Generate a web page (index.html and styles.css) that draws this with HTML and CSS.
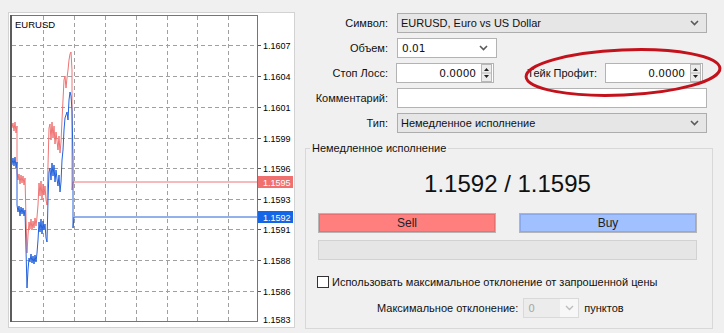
FILE: index.html
```html
<!DOCTYPE html>
<html lang="ru">
<head>
<meta charset="utf-8">
<title>Ордер</title>
<link rel="stylesheet" href="styles.css">
</head>
<body>
<div class="app">
  <div class="chart-pane">
    <svg class="chart" width="287" height="316" viewBox="8 12 287 316" xmlns="http://www.w3.org/2000/svg">
      <rect x="8" y="12" width="287" height="316" fill="#d2d2d2"/>
      <rect x="9" y="13" width="285" height="314" fill="#ffffff"/>
      <path class="grid" d="M12 45.5H257M12 76.5H257M12 107.5H257M12 138.5H257M12 168.5H257M12 199.5H257M12 229.5H257M12 260.5H257M12 291.5H257"/>
      <path class="grid" d="M43.5 16V321M74.5 16V321M105.5 16V321M136.5 16V321M167.5 16V321M197.5 16V321M228.5 16V321"/>
      <polyline fill="none" stroke="#ef7474" stroke-width="1" points="12,128 13,123 14,131 15,122 16,133 17,126 17,172 18,180 19,174 20,184 21,175 22,183 23,176 24,185 25,178 26,218 27,253 28,235 29,222 30,229 31,219 32,230 33,221 34,228 35,218 36,226 37,217 38,205 39,183 40,196 41,181 42,199 43,184 44,195 45,186 46,200 47,205 48,165 49,128 50,124 51,140 52,122 53,138 54,126 55,144 56,132 57,141 58,150 59,136 60,153 61,142 62,120 63,100 64,80 65,76 66,88 67,78 68,70 69,60 70,54 71,52 72,70 72,190 73,182 257,182"/>
      <polyline fill="none" stroke="#2462dc" stroke-width="1" points="12,165 13,158 14,166 15,157 16,168 17,162 17,205 18,212 19,206 20,216 21,207 22,214 23,208 24,216 25,210 26,250 27,288 28,270 29,258 30,262 31,254 32,263 33,256 34,264 35,255 36,262 37,253 38,240 39,222 40,232 41,219 42,234 43,221 44,230 45,224 46,238 47,242 48,200 49,172 50,168 51,180 52,163 53,176 54,165 55,182 56,170 57,179 58,186 59,175 60,192 61,182 62,160 63,150 64,130 65,118 66,115 67,112 68,120 69,100 70,92 71,96 72,110 73,160 73,228 74,217 257,217"/>
      <rect x="11.5" y="15.5" width="246" height="306" fill="none" stroke="#757575"/>
      <line x1="11" y1="15" x2="11" y2="322" stroke="#5c5c5c" stroke-width="2"/>
      <path d="M258 45.5h3M258 76.5h3M258 107.5h3M258 138.5h3M258 168.5h3M258 199.5h3M258 229.5h3M258 260.5h3M258 291.5h3" stroke="#555" stroke-width="1"/>
      <text class="sym" x="15" y="27.5">EURUSD</text>
      <g class="axis">
        <text x="263" y="49">1.1607</text>
        <text x="263" y="80">1.1604</text>
        <text x="263" y="111">1.1601</text>
        <text x="263" y="141.5">1.1599</text>
        <text x="263" y="172">1.1596</text>
        <text x="263" y="202.5">1.1593</text>
        <text x="263" y="232.5">1.1591</text>
        <text x="263" y="264">1.1588</text>
        <text x="263" y="295">1.1586</text>
        <text x="263" y="323">1.1583</text>
      </g>
      <rect x="258" y="176" width="35" height="12" fill="#f07070"/>
      <text class="axis-tag" x="263" y="185.5">1.1595</text>
      <rect x="258" y="211" width="35" height="12" fill="#1466e6"/>
      <text class="axis-tag" x="263" y="220.5">1.1592</text>
    </svg>
  </div>

  <div class="order">
    <div class="fields">
      <label class="lbl">Символ:</label>
      <div class="select">
        <span class="val">EURUSD, Euro vs US Dollar</span>
        <svg class="chev" width="9" height="6" viewBox="0 0 9 6"><path d="M1 1 L4.5 4.5 L8 1" fill="none" stroke="#5a5a5a" stroke-width="1.6"/></svg>
      </div>

      <label class="lbl">Объем:</label>
      <div class="combo">
        <span class="val num">0.01</span>
        <svg class="chev" width="9" height="6" viewBox="0 0 9 6"><path d="M1 1 L4.5 4.5 L8 1" fill="none" stroke="#5a5a5a" stroke-width="1.6"/></svg>
      </div>

      <label class="lbl">Стоп Лосс:</label>
      <div class="pair">
        <div class="spin-input">
          <span class="val num">0.0000</span>
          <span class="spinner">
            <svg width="11" height="18" viewBox="0 0 11 18"><rect x="0.5" y="0.5" width="10" height="17" fill="#ececec" stroke="#b8b8b8"/><line x1="1" y1="9" x2="10" y2="9" stroke="#b8b8b8"/><path d="M3 7 L5.5 4 L8 7 Z" fill="#222"/><path d="M3 11 L5.5 14 L8 11 Z" fill="#222"/></svg>
          </span>
        </div>
        <label class="lbl tp">Тейк Профит:</label>
        <div class="spin-input wide">
          <span class="val num">0.0000</span>
          <span class="spinner">
            <svg width="11" height="18" viewBox="0 0 11 18"><rect x="0.5" y="0.5" width="10" height="17" fill="#ececec" stroke="#b8b8b8"/><line x1="1" y1="9" x2="10" y2="9" stroke="#b8b8b8"/><path d="M3 7 L5.5 4 L8 7 Z" fill="#222"/><path d="M3 11 L5.5 14 L8 11 Z" fill="#222"/></svg>
          </span>
        </div>
      </div>

      <label class="lbl">Комментарий:</label>
      <div class="input"></div>

      <label class="lbl">Тип:</label>
      <div class="select">
        <span class="val">Немедленное исполнение</span>
        <svg class="chev" width="9" height="6" viewBox="0 0 9 6"><path d="M1 1 L4.5 4.5 L8 1" fill="none" stroke="#5a5a5a" stroke-width="1.6"/></svg>
      </div>
    </div>

    <fieldset class="exec">
      <legend>Немедленное исполнение</legend>
      <div class="quote">1.1592 / 1.1595</div>
      <div class="buttons">
        <div class="btn sell">Sell</div>
        <div class="btn buy">Buy</div>
      </div>
      <div class="progress"></div>
      <div class="check-row">
        <span class="checkbox"></span>
        <span>Использовать максимальное отклонение от запрошенной цены</span>
      </div>
      <div class="dev-row">
        <span class="dev-lbl">Максимальное отклонение:</span>
        <div class="dev-select">
          <span class="dev-val">0</span>
          <span class="dev-arrow"><svg width="9" height="6" viewBox="0 0 9 6"><path d="M1 1 L4.5 4.5 L8 1" fill="none" stroke="#bdbdbd" stroke-width="1.4"/></svg></span>
        </div>
        <span class="dev-unit">пунктов</span>
      </div>
    </fieldset>
  </div>

  <svg class="mark" width="724" height="333" viewBox="0 0 724 333" xmlns="http://www.w3.org/2000/svg">
    <ellipse cx="623" cy="72.5" rx="97" ry="22.5" transform="rotate(-2.5 623 72.5)" fill="none" stroke="#c4121c" stroke-width="3"/>
  </svg>
</div>
</body>
</html>
```

FILE: styles.css
```css
html, body {
  margin: 0;
  padding: 0;
}
body {
  width: 724px;
  height: 333px;
  overflow: hidden;
  background: #f0f0f0;
  font-family: "Liberation Sans", Arial, sans-serif;
  font-size: 11px;
  color: #111;
}
.app {
  position: relative;
  display: flex;
  align-items: flex-start;
  padding: 12px 0 0 8px;
  height: 321px;
}
.chart-pane {
  width: 287px;
  height: 316px;
  flex: none;
}
.chart {
  display: block;
}
.chart .grid {
  fill: none;
  stroke: #a0a0a0;
  stroke-width: 1;
  stroke-dasharray: 4 3;
}
.chart .sym {
  font-family: "Liberation Sans", Arial, sans-serif;
  font-size: 9.5px;
  fill: #000;
}
.chart .axis text {
  font-family: "Liberation Sans", Arial, sans-serif;
  font-size: 9px;
  fill: #000;
}
.chart .axis-tag {
  font-family: "Liberation Sans", Arial, sans-serif;
  font-size: 9px;
  fill: #ffffff;
}

.order {
  flex: 1;
  padding-left: 5px;
  padding-top: 1px;
}
.fields {
  display: grid;
  grid-template-columns: 88px 310px;
  grid-auto-rows: 20px;
  column-gap: 9px;
  row-gap: 5px;
}
.lbl {
  display: flex;
  align-items: center;
  justify-content: flex-end;
  white-space: nowrap;
  color: #111;
}
.select, .combo, .input, .spin-input {
  box-sizing: border-box;
  height: 20px;
  display: flex;
  align-items: center;
  border: 1px solid #b3b3b3;
}
.select {
  background: #e6e6e6;
  border-color: #adadad;
  padding: 0 7px 0 3px;
  justify-content: space-between;
}
.combo {
  width: 100px;
  background: #fff;
  padding: 0 8px 0 4px;
  justify-content: space-between;
}
.input {
  background: #fff;
}
.val {
  white-space: nowrap;
}
.num {
  font-family: "DejaVu Sans", Verdana, sans-serif;
  font-size: 10.5px;
  color: #111;
}
.chev {
  display: block;
}
.pair {
  display: flex;
  align-items: center;
}
.spin-input {
  width: 98px;
  margin-left: -1px;
  background: #fff;
  justify-content: flex-end;
  padding-right: 1px;
  gap: 5px;
}
.spin-input.wide {
  margin-left: 8px;
  width: 98px;
}
.spinner svg {
  display: block;
}
.lbl.tp {
  width: 103px;
  height: 20px;
}

.exec {
  margin: 8px 11px 0 5px;
  padding: 0 15px 10px 12px;
  border: 1px solid #d8d8d8;
  min-width: 0;
}
.exec legend {
  padding: 0 2px;
  margin-left: -8px;
  line-height: 14px;
  font-size: 11px;
  color: #111;
}
.quote {
  margin-top: 15px;
  text-align: center;
  font-size: 24px;
  line-height: 28px;
  color: #111;
}
.buttons {
  margin-top: 15px;
  display: flex;
  gap: 23px;
}
.btn {
  box-sizing: border-box;
  flex: 1;
  height: 20px;
  display: flex;
  align-items: center;
  justify-content: center;
  font-size: 12px;
  color: #222;
  border: 1px solid #b5b5b5;
}
.sell {
  background: #ff7f7f;
  box-shadow: inset 0 0 0 1px #e87070;
}
.buy {
  background: #a0c0ff;
  box-shadow: inset 0 0 0 1px #8aa8ea;
}
.progress {
  box-sizing: border-box;
  margin-top: 7px;
  height: 20px;
  border: 1px solid #d2d2d2;
  background: #e6e6e6;
}
.check-row {
  margin-top: 15px;
  margin-left: -1px;
  display: flex;
  align-items: center;
  gap: 3px;
  height: 14px;
  font-size: 11px;
  white-space: nowrap;
}
.checkbox {
  box-sizing: border-box;
  width: 12px;
  height: 12px;
  border: 1px solid #333;
  background: #fff;
}
.dev-row {
  margin-top: 9px;
  margin-left: 59px;
  display: flex;
  align-items: center;
  gap: 5px;
  height: 20px;
  white-space: nowrap;
}
.dev-select {
  box-sizing: border-box;
  width: 56px;
  height: 20px;
  display: flex;
  border: 1px solid #d9d9d9;
}
.dev-val {
  flex: 1;
  background: #ececec;
  color: #a8a8a8;
  font-family: "DejaVu Sans", Verdana, sans-serif;
  font-size: 10.5px;
  display: flex;
  align-items: center;
  padding-left: 4px;
}
.dev-arrow {
  width: 18px;
  background: #f7f7f7;
  display: flex;
  align-items: center;
  justify-content: center;
}
.dev-arrow svg {
  display: block;
}

.mark {
  position: absolute;
  left: 0;
  top: 0;
  pointer-events: none;
}
```
